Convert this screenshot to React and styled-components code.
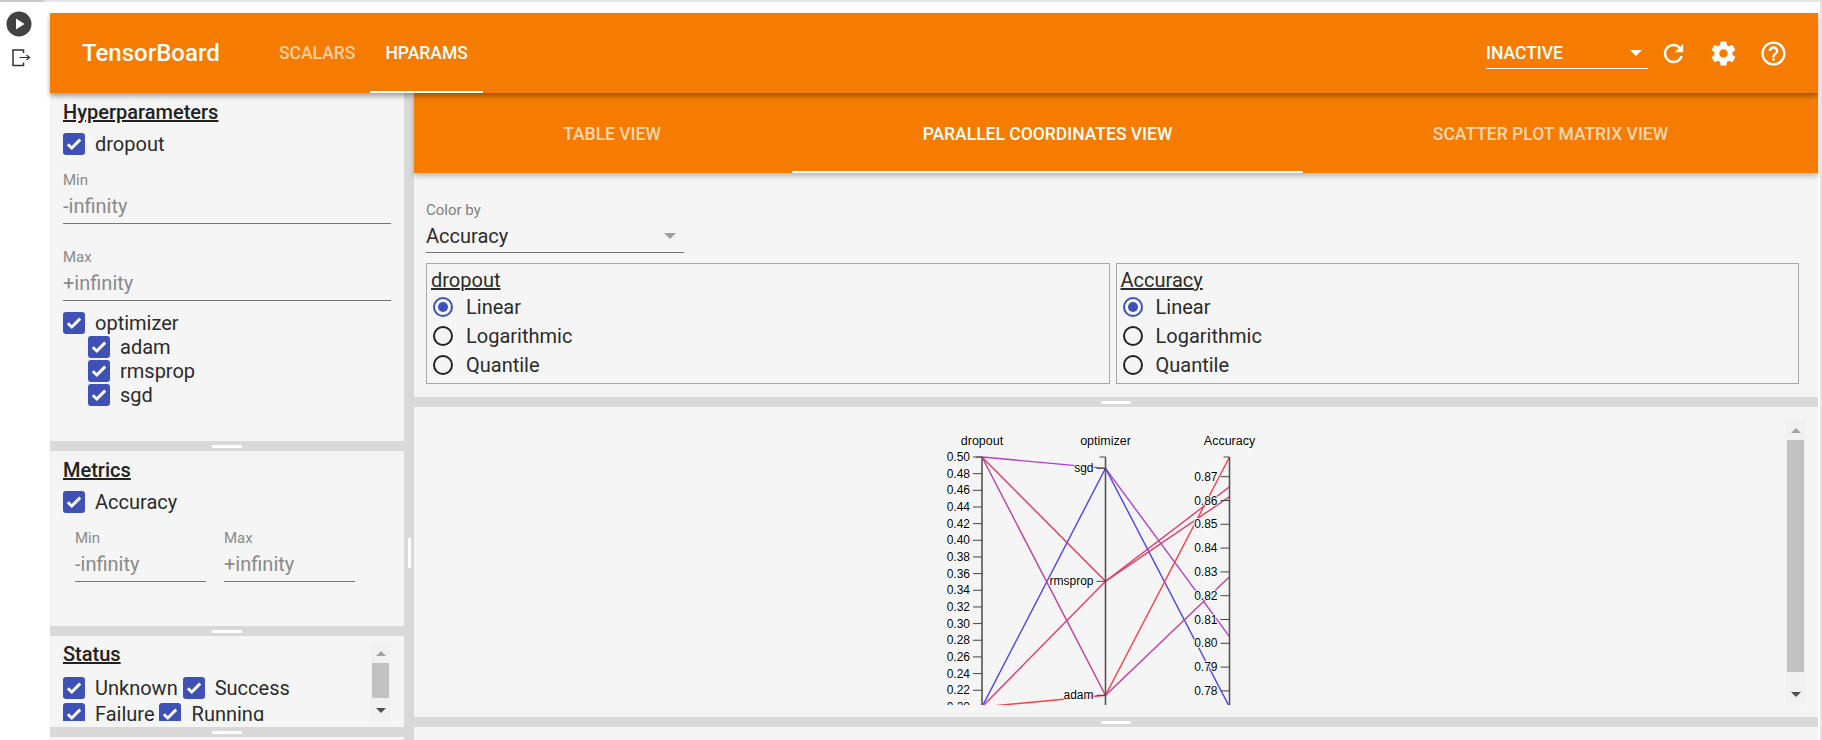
import React from "react";
import styled, { createGlobalStyle } from "styled-components";

const GlobalStyle = createGlobalStyle`
  html, body {
    margin: 0;
    height: 740px;
    overflow: hidden;
    background: #fff;
    font-family: Roboto, "Liberation Sans", sans-serif;
    color: #212121;
  }
`;

const ORANGE = "#f57c00";
const GUTTER = "#d9d9d9";
const PANEL = "#f5f5f5";

const Page = styled.div`
  width: 1820px;
  height: 740px;
  border-right: 2px solid #e4e4e4;
  display: flex;
  flex-direction: column;
  overflow: hidden;
`;

const TopStrip = styled.div`
  height: 2px;
  flex: none;
  background: linear-gradient(to right, #c8c8c8 44px, #e6e6e6 44px);
`;

const Cell = styled.div`
  display: flex;
  flex: 1;
  min-height: 0;
  padding-top: 11px;
`;

const CellControls = styled.div`
  width: 50px;
  flex: none;
  display: flex;
  flex-direction: column;
  align-items: flex-start;
  margin-top: -2px;
  padding: 0 0 0 6px;
  box-sizing: border-box;
`;

const ControlIcon = styled.svg`
  display: block;
  margin-left: ${(p) => p.$left || 0}px;
  margin-top: ${(p) => p.$top || 0}px;
`;

const Board = styled.div`
  width: 1768px;
  flex: none;
  display: flex;
  flex-direction: column;
  min-height: 0;
`;

const TopBar = styled.header`
  height: 80px;
  flex: none;
  background: ${ORANGE};
  display: flex;
  align-items: stretch;
  position: relative;
  z-index: 3;
  box-shadow: 0 3px 5px rgba(0, 0, 0, 0.35);
  color: #fff;
`;

const Logo = styled.div`
  font-size: 24px;
  font-weight: 500;
  line-height: 80px;
  margin-left: 32px;
  width: 182px;
`;

const NavTab = styled.div`
  display: flex;
  align-items: center;
  padding: 2px 15px 0;
  font-size: 17.5px;
  font-weight: 500;
  color: ${(p) => (p.$active ? "#fff" : "rgba(255,255,255,0.65)")};
  border-bottom: 2px solid ${(p) => (p.$active ? "#fff" : "transparent")};
  box-sizing: border-box;
`;

const Spacer = styled.div`
  flex: 1;
`;

const RunSelect = styled.div`
  width: 162px;
  height: 33px;
  margin-top: 23px;
  border-bottom: 1px solid #fff;
  display: flex;
  justify-content: space-between;
  align-items: center;
  font-size: 17.5px;
  font-weight: 500;
  padding: 2px 6px 0 0;
  box-sizing: border-box;
`;

const Caret = styled.span`
  width: 0;
  height: 0;
  border-left: 6px solid transparent;
  border-right: 6px solid transparent;
  border-top: 6px solid ${(p) => p.$color || "#fff"};
  flex: none;
`;

const IconRow = styled.div`
  display: flex;
  align-items: center;
  gap: 21px;
  margin: 0 30px 0 11px;
`;

const Layout = styled.div`
  display: flex;
  flex: 1;
  min-height: 0;
  background: ${GUTTER};
`;

const Sidebar = styled.aside`
  width: 354px;
  flex: none;
  display: flex;
  flex-direction: column;
`;

const VerticalGutter = styled.div`
  width: 10px;
  flex: none;
  display: flex;
  align-items: flex-start;
  justify-content: center;
  padding-top: 445px;
  box-sizing: border-box;
  &::after {
    content: "";
    display: block;
    width: 3px;
    height: 30px;
    background: #fff;
  }
`;

const Gutter = styled.div`
  height: 10px;
  flex: none;
  display: flex;
  align-items: center;
  justify-content: center;
  &::after {
    content: "";
    display: block;
    width: 30px;
    height: 3px;
    background: #fff;
  }
`;

const Section = styled.section`
  height: ${(p) => p.$height}px;
  flex: none;
  background: ${PANEL};
  padding: 6px 13px 0;
  box-sizing: border-box;
  overflow: hidden;
`;

const SectionTitle = styled.div`
  font-size: 20px;
  font-weight: 500;
  line-height: 24px;
  padding-top: ${(p) => p.$nudge ?? 1}px;
  text-decoration: underline;
  margin-bottom: ${(p) => p.$gap ?? 9}px;
`;

const CheckRow = styled.div`
  display: flex;
  align-items: center;
  height: 22px;
  margin-top: ${(p) => p.$top || 0}px;
  margin-left: ${(p) => p.$indent || 0}px;
  font-size: 20px;
`;

const Box = styled.span`
  width: 22px;
  height: 22px;
  border-radius: 3px;
  background: #3f51b5;
  flex: none;
  display: flex;
  align-items: center;
  justify-content: center;
`;

const CheckLabel = styled.span`
  margin-left: ${(p) => p.$gap ?? 10}px;
  margin-right: ${(p) => p.$after || 0}px;
  color: #2b2b2b;
`;

const Field = styled.div`
  width: ${(p) => p.$width || "328px"};
  margin-top: ${(p) => p.$top || 0}px;
`;

const FieldLabel = styled.div`
  font-size: 15px;
  line-height: 18px;
  color: #8a8a8a;
  margin-bottom: 5px;
`;

const FieldValue = styled.div`
  font-size: 20px;
  line-height: 24px;
  color: #8a8a8a;
  padding-bottom: 5px;
  border-bottom: 1px solid #757575;
`;

const FieldPair = styled.div`
  display: flex;
  gap: 18px;
  padding-left: 12px;
`;

const StatusBody = styled.div`
  display: flex;
  height: 79px;
  overflow: hidden;
  justify-content: space-between;
`;

const StatusList = styled.div`
  flex: 1;
`;

const Scrollbar = styled.div`
  width: 21px;
  height: ${(p) => p.$height}px;
  flex: none;
  background: #f1f1f1;
  display: flex;
  flex-direction: column;
  align-items: center;
  padding: 9px 0 8px;
  box-sizing: border-box;
`;

const ArrowUp = styled.span`
  width: 0;
  height: 0;
  border-left: 5px solid transparent;
  border-right: 5px solid transparent;
  border-bottom: 5px solid #a3a3a3;
`;

const ArrowDown = styled.span`
  width: 0;
  height: 0;
  margin-top: auto;
  border-left: 5px solid transparent;
  border-right: 5px solid transparent;
  border-top: 5px solid #505050;
`;

const Thumb = styled.span`
  width: 17px;
  height: ${(p) => p.$height}px;
  margin-top: 7px;
  background: #c1c1c1;
`;

const Content = styled.main`
  flex: 1;
  min-width: 0;
  display: flex;
  flex-direction: column;
`;

const ViewTabs = styled.nav`
  height: 80px;
  flex: none;
  background: ${ORANGE};
  display: flex;
  position: relative;
  z-index: 2;
  box-shadow: 0 3px 5px rgba(0, 0, 0, 0.25);
`;

const ViewTab = styled.div`
  width: ${(p) => p.$width}px;
  flex: none;
  display: flex;
  align-items: center;
  justify-content: center;
  box-sizing: border-box;
  padding: 4px ${(p) => p.$right || 0}px 0 ${(p) => p.$left || 0}px;
  font-size: 17.5px;
  font-weight: 500;
  color: ${(p) => (p.$active ? "#fff" : "rgba(255,255,255,0.7)")};
  border-bottom: 2px solid ${(p) => (p.$active ? "#fff" : "transparent")};
`;

const ScalePanel = styled.section`
  height: 224px;
  flex: none;
  background: ${PANEL};
  padding: 28px 19px 0 12px;
  box-sizing: border-box;
`;

const SelectLabel = styled.div`
  font-size: 15px;
  line-height: 18px;
  color: #808080;
`;

const SelectValue = styled.div`
  width: 258px;
  height: 29px;
  margin-top: 5px;
  border-bottom: 1px solid #757575;
  display: flex;
  align-items: center;
  justify-content: space-between;
  padding: 0 8px 5px 0;
  box-sizing: border-box;
  font-size: 20px;
  color: #2b2b2b;
`;

const ScaleRow = styled.div`
  display: flex;
  gap: 6px;
  margin-top: 10px;
`;

const ScaleBox = styled.div`
  width: 684px;
  height: 121px;
  border: 1px solid #a8a8a8;
  box-sizing: border-box;
  padding: 4px 0 0 4px;
`;

const ScaleTitle = styled.div`
  font-size: 20px;
  line-height: 24px;
  text-decoration: underline;
  color: #2b2b2b;
`;

const RadioRow = styled.div`
  display: flex;
  align-items: center;
  height: 29px;
  margin-left: 2px;
  font-size: 20px;
  color: #2b2b2b;
`;

const Radio = styled.span`
  width: 20px;
  height: 20px;
  border-radius: 50%;
  border: 2px solid ${(p) => (p.$on ? "#3f51b5" : "#212121")};
  box-sizing: border-box;
  flex: none;
  margin-right: 13px;
  display: flex;
  align-items: center;
  justify-content: center;
  &::after {
    content: "";
    display: ${(p) => (p.$on ? "block" : "none")};
    width: 10px;
    height: 10px;
    border-radius: 50%;
    background: #3f51b5;
  }
`;

const PlotPanel = styled.section`
  height: 310px;
  flex: none;
  background: ${PANEL};
  display: flex;
  justify-content: space-between;
  padding: 12px 12px 0 0;
  box-sizing: border-box;
`;

const Plot = styled.svg`
  display: block;
  margin: 5px 0 0 486px;
  font-family: "Liberation Sans", Arial, sans-serif;
  font-size: 12px;
  fill: #000;
  text {
    text-shadow: 0 1px 0 #fff, 1px 0 0 #fff, 0 -1px 0 #fff, -1px 0 0 #fff;
  }
`;

const AxisTitle = styled.text`
  font-size: 12.5px;
  text-anchor: middle;
`;

const BottomStub = styled.div`
  flex: 1;
  background: ${PANEL};
`;

const Check = () => (
  <Box>
    <svg width="16" height="16" viewBox="0 0 16 16">
      <path d="M1.8 8.2l4 3.8L14.2 3.6" fill="none" stroke="#fff" strokeWidth="2.9" />
    </svg>
  </Box>
);

const CheckItem = ({ label, indent, top, gap, after }) => (
  <CheckRow $indent={indent} $top={top}>
    <Check />
    <CheckLabel $gap={gap} $after={after}>{label}</CheckLabel>
  </CheckRow>
);

const MaterialIcon = ({ d, size = 29 }) => (
  <svg width={size} height={size} viewBox="0 0 24 24" fill="#fff">
    <path d={d} />
  </svg>
);

const REFRESH =
  "M17.65 6.35C16.2 4.9 14.21 4 12 4c-4.42 0-7.99 3.58-7.99 8s3.57 8 7.99 8c3.73 0 6.84-2.55 7.73-6h-2.08c-.82 2.33-3.04 4-5.65 4-3.31 0-6-2.69-6-6s2.69-6 6-6c1.66 0 3.14.69 4.22 1.78L13 11h7V4l-2.35 2.35z";
const SETTINGS =
  "M19.43 12.98c.04-.32.07-.64.07-.98s-.03-.66-.07-.98l2.11-1.65c.19-.15.24-.42.12-.64l-2-3.46c-.12-.22-.39-.3-.61-.22l-2.49 1c-.52-.4-1.08-.73-1.69-.98l-.38-2.65C14.46 2.18 14.25 2 14 2h-4c-.25 0-.46.18-.49.42l-.38 2.65c-.61.25-1.17.59-1.69.98l-2.49-1c-.23-.09-.49 0-.61.22l-2 3.46c-.13.22-.07.49.12.64l2.11 1.65c-.04.32-.07.65-.07.98s.03.66.07.98l-2.11 1.65c-.19.15-.24.42-.12.64l2 3.46c.12.22.39.3.61.22l2.49-1c.52.4 1.08.73 1.69.98l.38 2.65c.03.24.24.42.49.42h4c.25 0 .46-.18.49-.42l.38-2.65c.61-.25 1.17-.59 1.69-.98l2.49 1c.23.09.49 0 .61-.22l2-3.46c.12-.22.07-.49-.12-.64l-2.11-1.65zM12 15.5c-1.93 0-3.5-1.57-3.5-3.5s1.57-3.5 3.5-3.5 3.5 1.57 3.5 3.5-1.57 3.5-3.5 3.5z";
const HELP =
  "M11 18h2v-2h-2v2zm1-16C6.48 2 2 6.48 2 12s4.48 10 10 10 10-4.48 10-10S17.52 2 12 2zm0 18c-4.41 0-8-3.59-8-8s3.59-8 8-8 8 3.59 8 8-3.59 8-8 8zm0-14c-2.21 0-4 1.79-4 4h2c0-1.1.9-2 2-2s2 .9 2 2c0 2-3 1.75-3 5h2c0-2.25 3-2.5 3-5 0-2.21-1.79-4-4-4z";

// svg coordinates: page x - 900, page y - 424
const AXIS_X = { dropout: 82, optimizer: 205.5, accuracy: 329.5 };
const DROPOUT_TOP = 33;
const DROPOUT_STEP = 16.66;
const dropoutTicks = Array.from({ length: 16 }, (_, i) => ({
  label: (0.5 - i * 0.02).toFixed(2),
  y: DROPOUT_TOP + i * DROPOUT_STEP,
}));
const accuracyTicks = Array.from({ length: 10 }, (_, i) => ({
  label: (0.87 - i * 0.01).toFixed(2),
  y: 52.7 + i * 23.8,
}));
const optimizerTicks = [
  { label: "sgd", y: 44.3 },
  { label: "rmsprop", y: 157.3 },
  { label: "adam", y: 271.3 },
];

const runs = [
  { from: 33, via: 44.3, to: 212.7, color: "#b03fd0" },
  { from: 282.9, via: 44.3, to: 283, color: "#4a45f5" },
  { from: 33, via: 157.3, to: 72.7, color: "#e63a62" },
  { from: 282.9, via: 157.3, to: 62.7, color: "#e53a6e" },
  { from: 33, via: 271.3, to: 152.7, color: "#c0429f" },
  { from: 282.9, via: 271.3, to: 33, color: "#fb3f4a" },
];

const Axis = ({ x, title, ticks, top = 33 }) => (
  <g>
    <AxisTitle x={x} y={21}>{title}</AxisTitle>
    <path d={`M${x} ${top}V290`} stroke="#555" strokeWidth="1.6" fill="none" />
    <path d={`M${x - 6} ${top}H${x}`} stroke="#444" fill="none" />
    {ticks.map((t) => (
      <g key={t.label}>
        <path d={`M${x - 9} ${t.y}H${x}`} stroke="#444" fill="none" />
        <text x={x - 12} y={t.y + 4} textAnchor="end">{t.label}</text>
      </g>
    ))}
  </g>
);

const ParallelPlot = () => (
  <Plot width="360" height="281" viewBox="0 0 360 281">
    {runs.map((r) => (
      <polyline
        key={r.color}
        points={`${AXIS_X.dropout},${r.from} ${AXIS_X.optimizer},${r.via} ${AXIS_X.accuracy},${r.to}`}
        fill="none"
        stroke={r.color}
        strokeWidth="1.4"
      />
    ))}
    <Axis x={AXIS_X.dropout} title="dropout" ticks={dropoutTicks} />
    <Axis x={AXIS_X.optimizer} title="optimizer" ticks={optimizerTicks} />
    <Axis x={AXIS_X.accuracy} title="Accuracy" ticks={accuracyTicks} />
  </Plot>
);

const ScaleOptions = ({ title }) => (
  <ScaleBox>
    <ScaleTitle>{title}</ScaleTitle>
    {["Linear", "Logarithmic", "Quantile"].map((o, i) => (
      <RadioRow key={o}>
        <Radio $on={i === 0} />
        {o}
      </RadioRow>
    ))}
  </ScaleBox>
);

const App = () => (
  <Page>
    <GlobalStyle />
    <TopStrip />
    <Cell>
      <CellControls>
        <ControlIcon width="26" height="26" viewBox="0 0 26 26">
          <circle cx="13" cy="13" r="12.5" fill="#424242" />
          <path d="M10 7.5l8.5 5.5-8.5 5.5z" fill="#fff" />
        </ControlIcon>
        <ControlIcon width="20" height="20" viewBox="0 0 20 20" $left={6} $top={12}>
          <path d="M11.5 4V1H1v15.5h10.5v-3" fill="none" stroke="#333" strokeWidth="1.5" />
          <path d="M7.5 8.5h9.5M14.5 6l3 2.5-3 2.5" fill="none" stroke="#333" strokeWidth="1.2" />
        </ControlIcon>
      </CellControls>
      <Board>
        <TopBar>
          <Logo>TensorBoard</Logo>
          <NavTab>SCALARS</NavTab>
          <NavTab $active>HPARAMS</NavTab>
          <Spacer />
          <RunSelect>
            INACTIVE
            <Caret />
          </RunSelect>
          <IconRow>
            <MaterialIcon d={REFRESH} />
            <MaterialIcon d={SETTINGS} />
            <MaterialIcon d={HELP} />
          </IconRow>
        </TopBar>
        <Layout>
          <Sidebar>
            <Section $height={348}>
              <SectionTitle>Hyperparameters</SectionTitle>
              <CheckItem label="dropout" />
              <Field $top={16}>
                <FieldLabel>Min</FieldLabel>
                <FieldValue>-infinity</FieldValue>
              </Field>
              <Field $top={24}>
                <FieldLabel>Max</FieldLabel>
                <FieldValue>+infinity</FieldValue>
              </Field>
              <CheckItem label="optimizer" top={11} />
              <CheckItem label="adam" indent={25} top={2} />
              <CheckItem label="rmsprop" indent={25} top={2} />
              <CheckItem label="sgd" indent={25} top={2} />
            </Section>
            <Gutter />
            <Section $height={175}>
              <SectionTitle>Metrics</SectionTitle>
              <CheckItem label="Accuracy" />
              <FieldPair>
                <Field $top={16} $width="131px">
                  <FieldLabel>Min</FieldLabel>
                  <FieldValue>-infinity</FieldValue>
                </Field>
                <Field $top={16} $width="131px">
                  <FieldLabel>Max</FieldLabel>
                  <FieldValue>+infinity</FieldValue>
                </Field>
              </FieldPair>
            </Section>
            <Gutter />
            <Section $height={91}>
              <StatusBody>
                <StatusList>
                  <SectionTitle $nudge={0} $gap={11}>Status</SectionTitle>
                  <CheckRow>
                    <Check />
                    <CheckLabel $after={5}>Unknown</CheckLabel>
                    <Check />
                    <CheckLabel>Success</CheckLabel>
                  </CheckRow>
                  <CheckRow $top={4}>
                    <Check />
                    <CheckLabel $after={4}>Failure</CheckLabel>
                    <Check />
                    <CheckLabel $gap={11}>Running</CheckLabel>
                  </CheckRow>
                </StatusList>
                <Scrollbar $height={79}>
                  <ArrowUp />
                  <Thumb $height={35} />
                  <ArrowDown />
                </Scrollbar>
              </StatusBody>
            </Section>
            <Gutter />
            <BottomStub />
          </Sidebar>
          <VerticalGutter />
          <Content>
            <ViewTabs>
              <ViewTab $width={378} $left={18}>TABLE VIEW</ViewTab>
              <ViewTab $width={511} $active>PARALLEL COORDINATES VIEW</ViewTab>
              <ViewTab $width={515} $right={20}>SCATTER PLOT MATRIX VIEW</ViewTab>
            </ViewTabs>
            <ScalePanel>
              <SelectLabel>Color by</SelectLabel>
              <SelectValue>
                Accuracy
                <Caret $color="#9e9e9e" />
              </SelectValue>
              <ScaleRow>
                <ScaleOptions title="dropout" />
                <ScaleOptions title="Accuracy" />
              </ScaleRow>
            </ScalePanel>
            <Gutter />
            <PlotPanel>
              <ParallelPlot />
              <Scrollbar $height={286}>
                <ArrowUp />
                <Thumb $height={232} />
                <ArrowDown />
              </Scrollbar>
            </PlotPanel>
            <Gutter />
            <BottomStub />
          </Content>
        </Layout>
      </Board>
    </Cell>
  </Page>
);

export default App;
